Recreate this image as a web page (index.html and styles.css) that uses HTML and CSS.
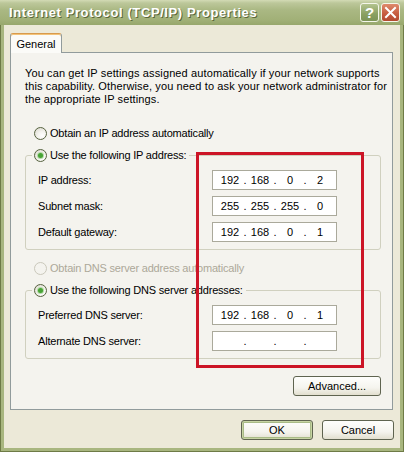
FILE: index.html
```html
<!DOCTYPE html>
<html>
<head>
<meta charset="utf-8">
<title>Internet Protocol (TCP/IP) Properties</title>
<link rel="stylesheet" href="styles.css">
</head>
<body>
<div class="window">
  <div class="titlebar">
    <div class="title">Internet Protocol (TCP/IP) Properties</div>
    <div class="tb-btn tb-help">?</div>
    <div class="tb-btn tb-close">
      <svg width="13" height="13" viewBox="0 0 13 13"><path d="M2 2 L11 11 M11 2 L2 11" stroke="#fff" stroke-width="2" stroke-linecap="square"/></svg>
    </div>
  </div>
  <div class="frame">
    <div class="client">
      <div class="tabs"><div class="tab">General</div></div>
      <div class="panel">
        <p class="desc">You can get IP settings assigned automatically if your network supports<br>this capability. Otherwise, you need to ask your network administrator for<br>the appropriate IP settings.</p>
        <div class="opt opt-first"><span class="radio"></span><span>Obtain an IP address automatically</span></div>
        <fieldset class="group">
          <legend><span class="opt"><span class="radio on"></span><span>Use the following IP address:</span></span></legend>
          <div class="row"><span class="lbl">IP address:</span><span class="ip"><span class="oct">192</span><span class="dot">.</span><span class="oct">168</span><span class="dot">.</span><span class="oct">0</span><span class="dot">.</span><span class="oct">2</span></span></div>
          <div class="row"><span class="lbl">Subnet mask:</span><span class="ip"><span class="oct">255</span><span class="dot">.</span><span class="oct">255</span><span class="dot">.</span><span class="oct">255</span><span class="dot">.</span><span class="oct">0</span></span></div>
          <div class="row"><span class="lbl">Default gateway:</span><span class="ip"><span class="oct">192</span><span class="dot">.</span><span class="oct">168</span><span class="dot">.</span><span class="oct">0</span><span class="dot">.</span><span class="oct">1</span></span></div>
        </fieldset>
        <div class="opt opt-dis"><span class="radio dis"></span><span>Obtain DNS server address automatically</span></div>
        <fieldset class="group">
          <legend><span class="opt"><span class="radio on"></span><span>Use the following DNS server addresses:</span></span></legend>
          <div class="row"><span class="lbl">Preferred DNS server:</span><span class="ip"><span class="oct">192</span><span class="dot">.</span><span class="oct">168</span><span class="dot">.</span><span class="oct">0</span><span class="dot">.</span><span class="oct">1</span></span></div>
          <div class="row"><span class="lbl">Alternate DNS server:</span><span class="ip"><span class="oct"></span><span class="dot">.</span><span class="oct"></span><span class="dot">.</span><span class="oct"></span><span class="dot">.</span><span class="oct"></span></span></div>
        </fieldset>
        <div class="adv-row"><button class="btn btn-adv">Advanced...</button></div>
      </div>
      <div class="footer">
        <button class="btn btn-default">OK</button>
        <button class="btn">Cancel</button>
      </div>
    </div>
  </div>
  <div class="highlight"></div>
</div>
</body>
</html>
```
FILE: styles.css
```css
* { box-sizing: border-box; }
body {
  margin: 0;
  width: 404px;
  height: 452px;
  overflow: hidden;
  font-family: "Liberation Sans", Arial, sans-serif;
  font-size: 11px;
  color: #000;
  background: #ece9d8;
}
.window {
  position: relative;
  width: 404px;
  height: 452px;
  display: flex;
  flex-direction: column;
}
.titlebar {
  height: 25px;
  flex: none;
  display: flex;
  align-items: center;
  padding: 0 4px 0 9px;
  background: linear-gradient(#d3dbb5 0, #bcc79a 3px, #aab883 10px, #a1b077 20px, #97a76c 25px);
}
.title {
  flex: 1;
  color: #fff;
  font-weight: bold;
  font-size: 13px;
  letter-spacing: 0.6px;
  text-shadow: 1px 1px 0 #59663a;
}
.tb-btn {
  width: 19px;
  height: 19px;
  border: 1px solid #f4f6ea;
  border-radius: 3px;
  display: flex;
  align-items: center;
  justify-content: center;
}
.tb-help {
  margin-right: 2px;
  background: linear-gradient(#b3c38e, #8aa062 60%, #7d9456);
  color: #fff;
  font-weight: bold;
  font-size: 15px;
}
.tb-close {
  background: linear-gradient(#de8a6c, #c55a3e 60%, #b24a30);
}
.frame {
  flex: 1;
  display: flex;
  padding: 0 3px 3px;
  background: #a8b67f;
  border: 1px solid #6e7b46;
  border-top: 0;
  min-height: 0;
}
.client {
  flex: 1;
  min-width: 0;
  display: flex;
  flex-direction: column;
  background: #ece9d8;
  padding: 8px 6px 0 6px;
  letter-spacing: -0.2px;
}
.tabs { display: flex; }
.tab {
  position: relative;
  z-index: 1;
  margin-bottom: -1px;
  width: 52px;
  height: 20px;
  border: 1px solid #919b9c;
  border-top-color: #d89a4c;
  border-bottom: 0;
  border-radius: 3px 3px 0 0;
  box-shadow: inset 0 1px 0 #f3c379;
  background: #fbfbf8;
  display: flex;
  align-items: center;
  justify-content: center;
  padding-top: 1px;
  letter-spacing: 0;
}
.panel {
  min-width: 0;
  margin-right: 1px;
  border: 1px solid #919b9c;
  background: #f4f3ee;
  padding: 14px 11px 13px 14px;
}
.desc {
  margin: 0 -8px 0 0;
  line-height: 13px;
  white-space: nowrap;
  letter-spacing: 0.12px;
}
.opt {
  display: flex;
  align-items: center;
  height: 20px;
  gap: 3px;
  white-space: nowrap;
}
.opt-first { margin: 17px 0 0 9px; }
.opt-dis { margin: 8px 0 0 9px; color: #aca899; }
.radio {
  width: 13px;
  height: 13px;
  flex: none;
  border-radius: 50%;
  border: 1px solid #56623f;
  background: radial-gradient(circle at 65% 70%, #ffffff 0, #f4f3ee 40%, #d6d4c8 100%);
  display: flex;
  align-items: center;
  justify-content: center;
}
.radio.on::after {
  content: "";
  width: 5px;
  height: 5px;
  border-radius: 50%;
  background: #47a334;
  box-shadow: 0 0 0 1px #b4d9a8;
}
.radio.dis {
  border-color: #cac8bb;
  background: #f4f3ee;
}
.group {
  margin: 2px 0 0;
  padding: 5px 0 7px 12px;
  border: 1px solid #d0d0bf;
  border-radius: 3px;
  min-width: 0;
}
.group legend {
  margin-left: -6px;
  padding: 0 3px 0 2px;
}
.row {
  display: flex;
  align-items: center;
  height: 20px;
}
.row + .row { margin-top: 6px; }
.lbl { width: 174px; flex: none; }
.ip {
  width: 125px;
  height: 20px;
  border: 1px solid #aaa99b;
  background: #fff;
  display: flex;
  align-items: center;
  padding-left: 6px;
  letter-spacing: 0;
}
.oct { width: 22px; text-align: center; }
.dot { width: 8px; text-align: center; }
.adv-row {
  margin-top: 17px;
  display: flex;
  justify-content: flex-end;
}
.btn {
  height: 20px;
  width: 72px;
  padding: 0;
  font: inherit;
  color: #000;
  border: 1px solid #5f6450;
  border-radius: 3px;
  background: linear-gradient(#fefefc, #f5f4ee 60%, #e2dfcf);
}
.btn-adv { width: 88px; }
.btn-default {
  box-shadow: inset 0 0 0 1px #c7d4a3, inset 0 0 0 2px #a9bb87;
}
.footer {
  margin-top: 10px;
  display: flex;
  justify-content: flex-end;
  gap: 9px;
}
.highlight {
  position: absolute;
  left: 196px;
  top: 152px;
  width: 168px;
  height: 216px;
  border: 3px solid #cc1426;
  pointer-events: none;
}
```
